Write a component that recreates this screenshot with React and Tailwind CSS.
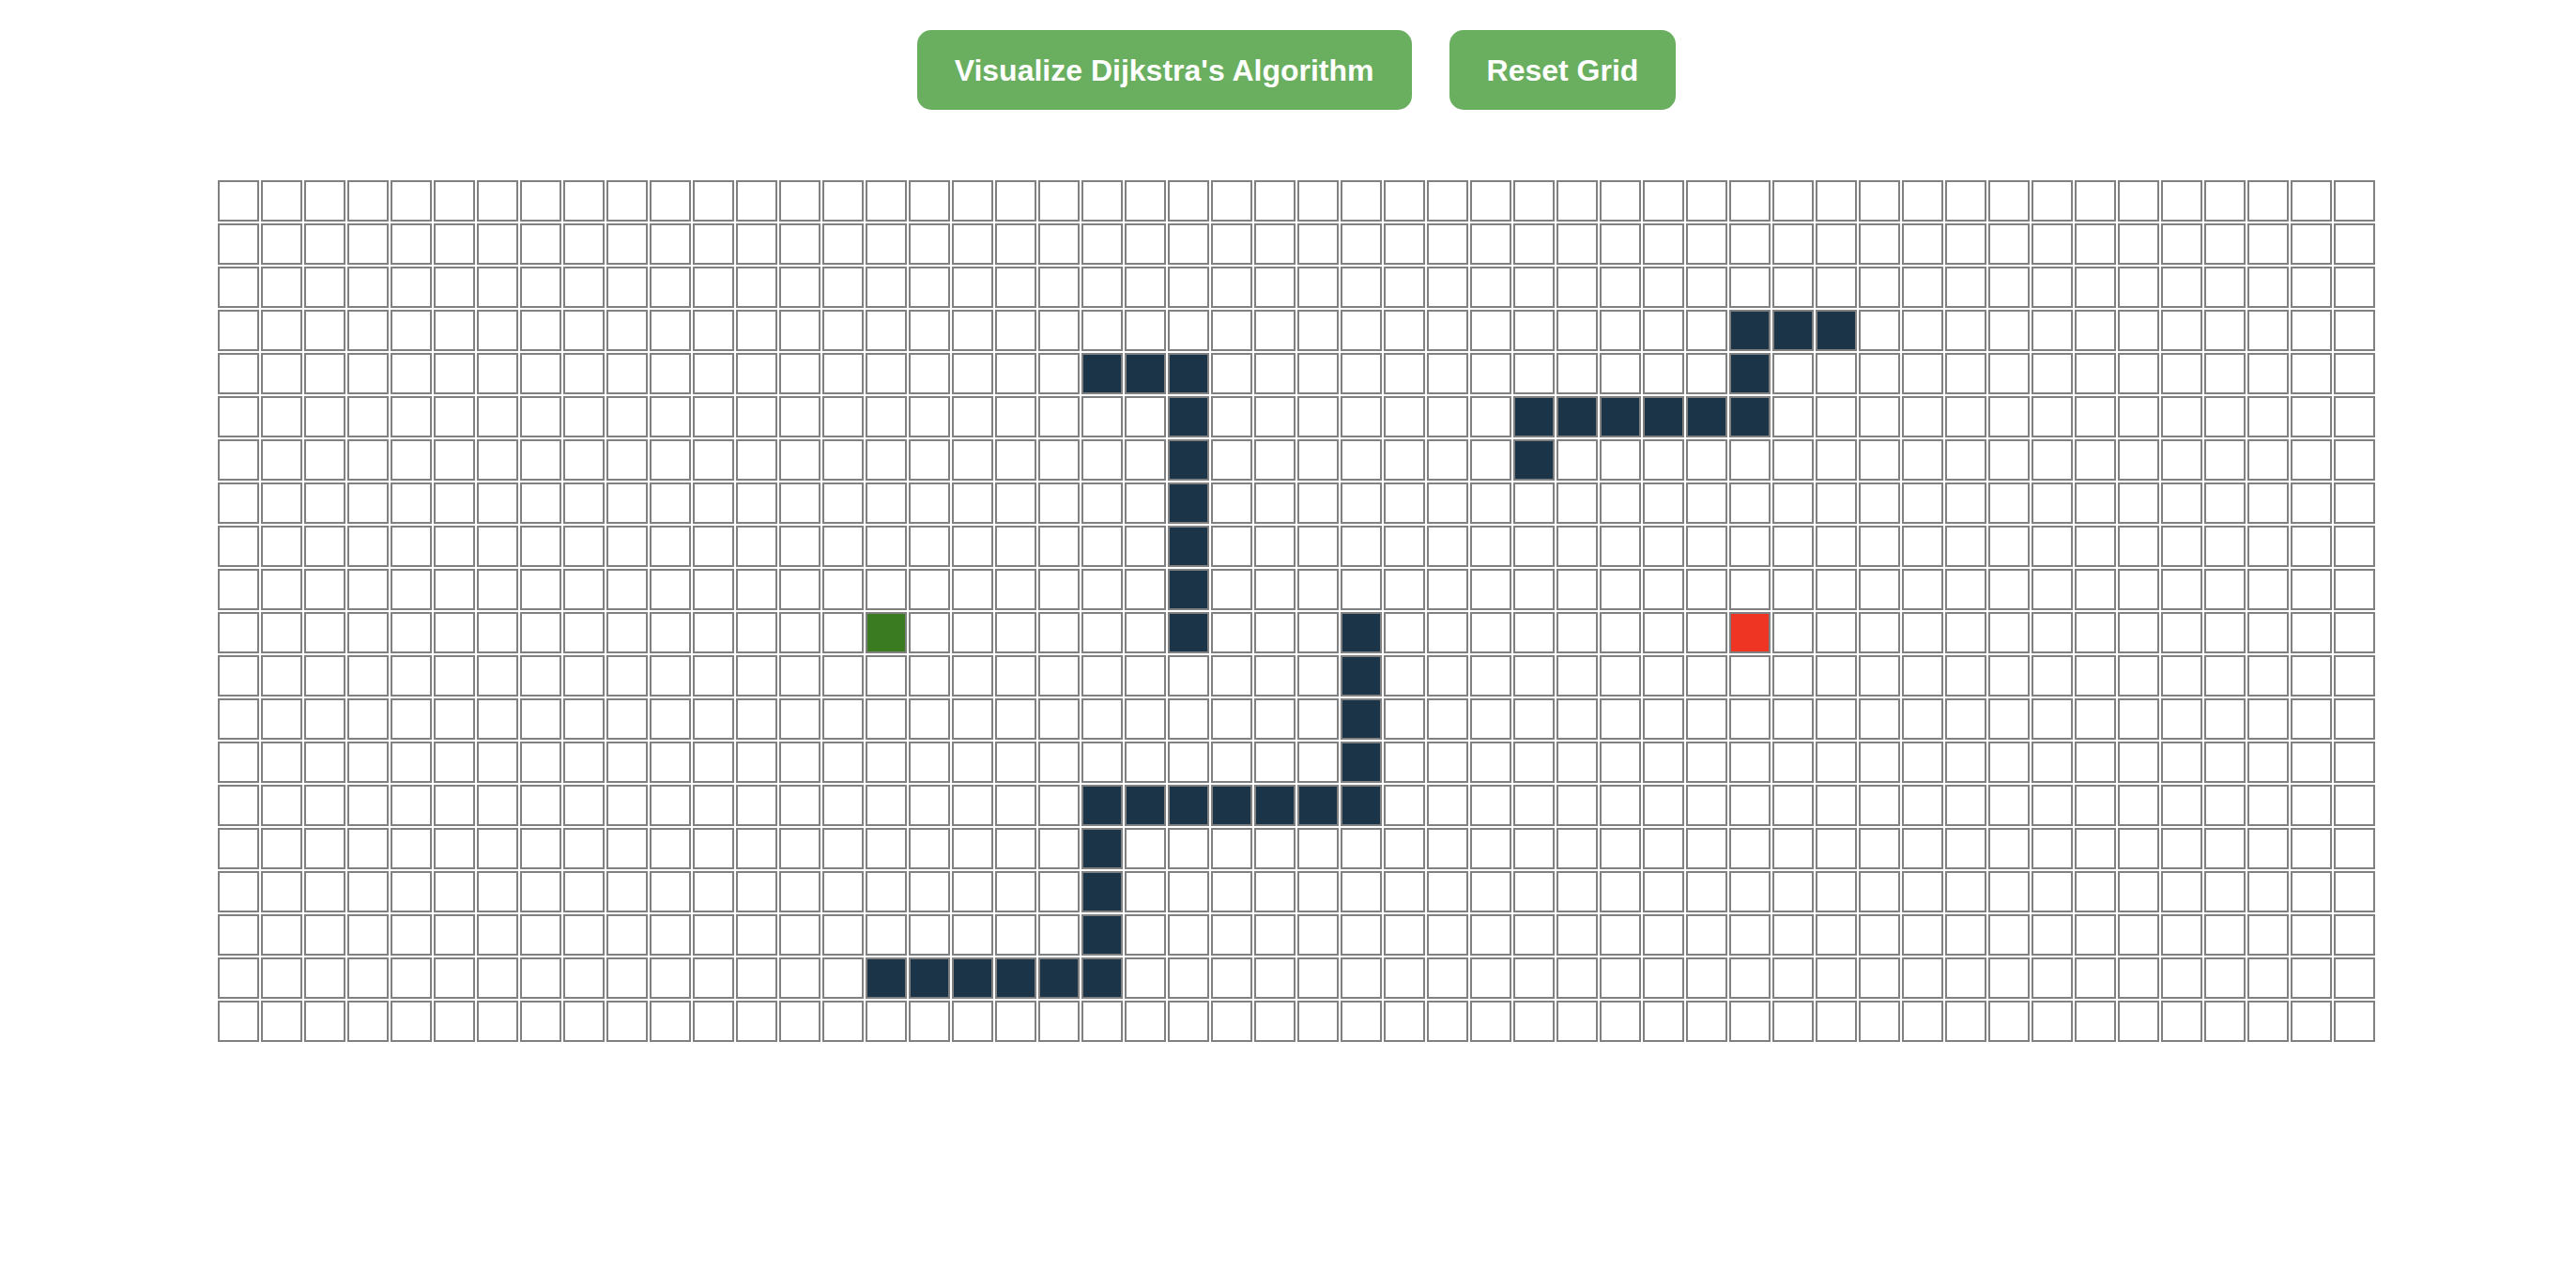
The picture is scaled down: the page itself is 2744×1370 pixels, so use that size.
import React from "react";

const ROWS = 20;
const COLS = 50;
const START = [10, 15];
const END = [10, 35];
const WALLS = new Set([
  "3-35", "3-36", "3-37",
  "4-20", "4-21", "4-22", "4-35",
  "5-22", "5-30", "5-31", "5-32", "5-33", "5-34", "5-35",
  "6-22", "6-30",
  "7-22", "8-22", "9-22",
  "10-22", "10-26",
  "11-26", "12-26", "13-26",
  "14-20", "14-21", "14-22", "14-23", "14-24", "14-25", "14-26",
  "15-20", "16-20", "17-20",
  "18-15", "18-16", "18-17", "18-18", "18-19", "18-20",
]);

function Cell({ r, c }) {
  let bg = "bg-white";
  if (r === START[0] && c === START[1]) bg = "bg-[#3a7b22]";
  else if (r === END[0] && c === END[1]) bg = "bg-[#ee3524]";
  else if (WALLS.has(`${r}-${c}`)) bg = "bg-[#1b3448]";
  return <div className={`w-[44px] h-[44px] border-2 border-[#808080] ${bg}`} />;
}

export default function App() {
  const rows = [];
  for (let r = 0; r < ROWS; r++) {
    const cells = [];
    for (let c = 0; c < COLS; c++) cells.push(<Cell key={c} r={r} c={c} />);
    rows.push(
      <div key={r} className="flex gap-[2px]">
        {cells}
      </div>
    );
  }
  return (
    <div
      className="w-full min-h-[1370px] bg-white pl-[18px] pt-[32px] flex flex-col items-center"
      style={{ fontFamily: '"Liberation Sans", Arial, sans-serif' }}
    >
      <div className="flex gap-[40px]">
        <button className="h-[85px] px-[40px] rounded-[15px] bg-[#6aaf5f] text-white font-bold text-[32px] leading-none">
          Visualize Dijkstra's Algorithm
        </button>
        <button className="h-[85px] px-[40px] rounded-[15px] bg-[#6aaf5f] text-white font-bold text-[32px] leading-none">
          Reset Grid
        </button>
      </div>
      <div className="mt-[75px] flex flex-col gap-[2px]">{rows}</div>
    </div>
  );
}
